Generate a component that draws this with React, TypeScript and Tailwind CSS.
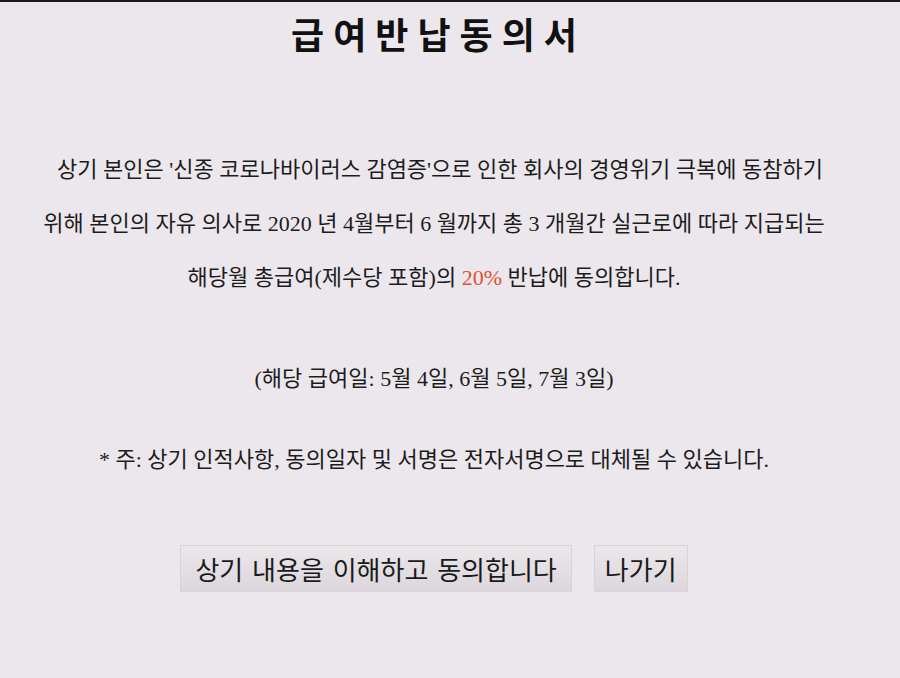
import React from 'react';

const bodyFont = "font-['Liberation_Serif','Noto_Sans_CJK_KR',serif]";
const btn =
  "h-[47px] text-[26px] leading-none text-[#1a1a1a] border border-[#d8d3d8] bg-gradient-to-b from-[#ebe7eb] to-[#dbd7dc]";

export default function App() {
  return (
    <div className="min-h-[678px] w-full bg-[#ece7ed] border-t-2 border-[#1b191d]">
      <div className="flex flex-col items-center pr-[32px] text-[#1c1c1c]">
        <h1 className="mt-[11px] pl-[9px] text-[36px] leading-[40px] font-bold tracking-[9px] text-[#111] font-['Noto_Sans_CJK_KR',sans-serif]">
          급여반납동의서
        </h1>

        <p className={`mt-[90px] text-center text-[22px] leading-[54px] ${bodyFont}`}>
          <span className="pl-[12px]">상기 본인은 '신종 코로나바이러스 감염증'으로 인한 회사의 경영위기 극복에 동참하기</span>
          <br />
          위해 본인의 자유 의사로 2020 년 4월부터 6 월까지 총 3 개월간 실근로에 따라 지급되는
          <br />
          해당월 총급여(제수당 포함)의 <span className="text-[#e0512f]">20%</span> 반납에 동의합니다.
        </p>

        <p className={`mt-[47px] text-[22px] leading-[54px] ${bodyFont}`}>
          (해당 급여일: 5월 4일, 6월 5일, 7월 3일)
        </p>

        <p className={`mt-[27px] text-[22px] leading-[54px] ${bodyFont}`}>
          * 주: 상기 인적사항, 동의일자 및 서명은 전자서명으로 대체될 수 있습니다.
        </p>

        <div className="mt-[58px] flex gap-[22px] font-['Noto_Sans_CJK_KR',sans-serif]">
          <button className={`${btn} px-[14px] [word-spacing:3px]`}>
            상기 내용을 이해하고 동의합니다
          </button>
          <button className={`${btn} px-[10px]`}>나가기</button>
        </div>
      </div>
    </div>
  );
}
